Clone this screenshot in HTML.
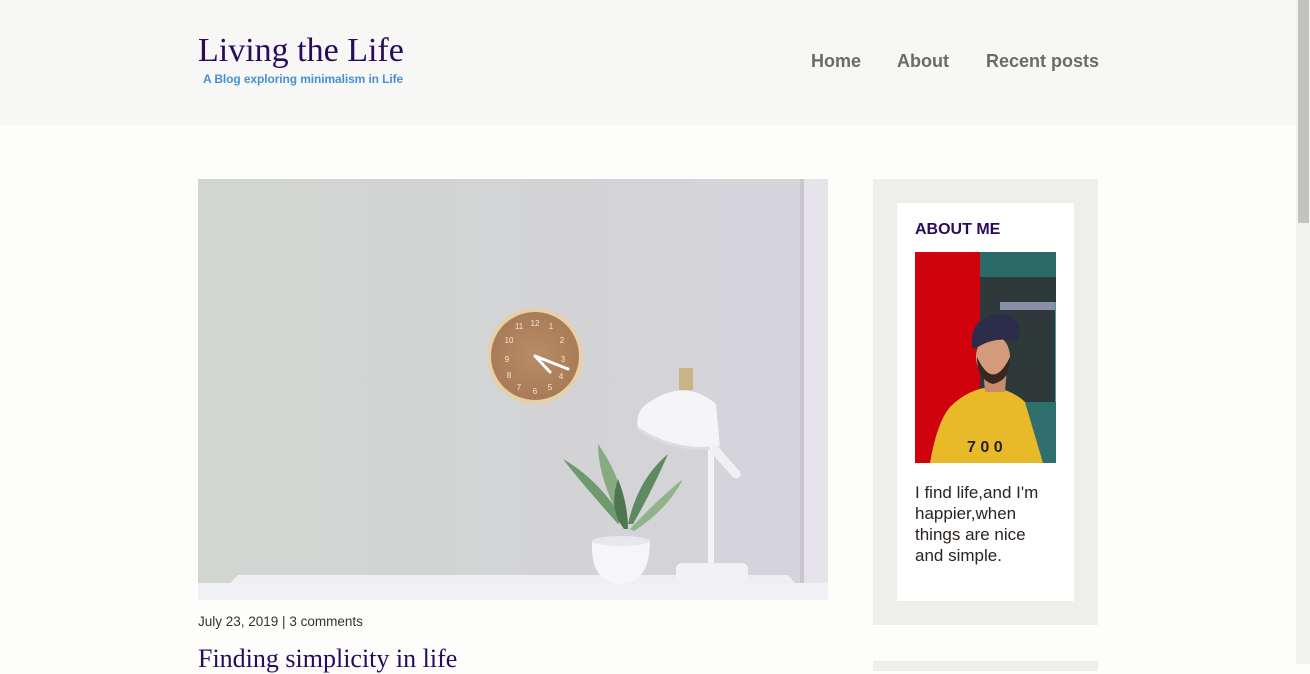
<!DOCTYPE html>
<html><head><meta charset="utf-8"><style>
*{margin:0;padding:0;box-sizing:border-box}
html,body{width:1310px;height:664px;overflow:hidden;background:#fdfdfb;font-family:"Liberation Sans",sans-serif}
.header{position:absolute;left:0;top:0;width:1296px;height:125px;background:#f7f7f5}
.logo{position:absolute;left:198px;top:32px;font-family:"Liberation Serif",serif;font-size:34px;color:#2a0a5e}
.tag{position:absolute;left:203px;top:72px;font-size:12px;font-weight:bold;color:#4a8fd4;letter-spacing:-0.1px}
.nav{position:absolute;top:51px;font-size:18px;font-weight:bold;color:#6e6a66}
.scroll{position:absolute;left:1296px;top:0;width:14px;height:664px;background:#f1f1ef}
.thumb{position:absolute;left:1298px;top:0;width:11px;height:223px;background:#c2c2bf}
.side{position:absolute;left:873px;top:179px;width:225px;height:446px;background:#eeeeeb}
.inner{position:absolute;left:897px;top:203px;width:177px;height:398px;background:#fff}
.side2{position:absolute;left:873px;top:661px;width:225px;height:10px;background:#eeeeeb}
h3{position:absolute;left:915px;top:221px;font-size:16px;font-weight:bold;color:#2a0a5e}
.about{position:absolute;left:915px;top:482px;width:135px;font-size:17px;line-height:21px;color:#2b2420}
.meta{position:absolute;left:198px;top:614px;font-size:13.5px;color:#333}
.title{position:absolute;left:198px;top:644px;font-family:"Liberation Serif",serif;font-size:26px;color:#2a0a5e}
</style></head><body>
<div class="header">
<div class="logo">Living the Life</div>
<div class="tag">A Blog exploring minimalism in Life</div>
<div class="nav" style="left:811px">Home</div>
<div class="nav" style="left:897px">About</div>
<div class="nav" style="left:986px">Recent posts</div>
</div>
<svg style="position:absolute;left:198px;top:179px" width="630" height="421" viewBox="0 0 630 421">
<defs><linearGradient id="w" x1="0" x2="1"><stop offset="0" stop-color="#d2d6d1"/><stop offset="0.6" stop-color="#d3d3d6"/><stop offset="1" stop-color="#d6d4dc"/></linearGradient>
<radialGradient id="c"><stop offset="0" stop-color="#b88c66"/><stop offset="1" stop-color="#a97c58"/></radialGradient></defs>
<rect width="630" height="421" fill="url(#w)"/>
<rect x="606" width="24" height="421" fill="#e6e4ea"/>
<rect x="602" width="4" height="421" fill="#c9c7cd"/>
<path d="M40 396 L590 396 L612 421 L15 421Z" fill="#eeedf1"/>
<rect x="0" y="404" width="630" height="17" fill="#f1f0f4"/>
<circle cx="337" cy="177" r="48" fill="#e7cfa8"/>
<circle cx="337" cy="177" r="44" fill="url(#c)"/>
<path d="M337 177 L370 190 M337 177 L352 193" stroke="#fff" stroke-width="3" stroke-linecap="round"/>
<g fill="#f3e6d6" font-size="8" font-family="Liberation Sans" text-anchor="middle">
<text x="337" y="147">12</text><text x="365" y="183">3</text><text x="337" y="215">6</text><text x="309" y="183">9</text>
<text x="353" y="150">1</text><text x="364" y="164">2</text><text x="363" y="200">4</text><text x="352" y="211">5</text>
<text x="321" y="211">7</text><text x="311" y="199">8</text><text x="311" y="164">10</text><text x="321" y="150">11</text></g>
<rect x="510" y="262" width="6" height="130" fill="#f4f4f6"/>
<ellipse cx="514" cy="396" rx="36" ry="12" fill="#f2f2f4"/>
<rect x="478" y="384" width="72" height="14" rx="6" fill="#f2f2f4"/>
<rect x="481" y="189" width="14" height="22" fill="#c9b485"/>
<path d="M455 221 Q488 200 518 225 L522 268 Q480 275 440 250 Q436 230 455 221Z" fill="#f5f5f7"/>
<path d="M440 250 Q480 275 522 268" stroke="#dcdce2" stroke-width="3" fill="none"/>
<path d="M516 270 L538 295" stroke="#f0f0f2" stroke-width="9" stroke-linecap="round"/>
<g fill="#6f9a6e">
<path d="M420 345 Q380 300 365 280 Q400 300 425 340Z"/>
<path d="M425 345 Q400 300 400 265 Q425 300 430 345Z" fill="#86ab80"/>
<path d="M430 345 Q440 300 470 275 Q455 310 435 345Z" fill="#5d8a5f"/>
<path d="M432 350 Q460 320 485 300 Q470 330 436 352Z" fill="#8fb38a"/>
<path d="M426 350 Q410 330 420 300 Q430 325 430 350Z" fill="#4e7651"/>
</g>
<path d="M394 362 Q392 404 423 405 Q452 404 452 362Z" fill="#f6f6f8"/>
<ellipse cx="423" cy="362" rx="29" ry="5" fill="#e8e8ec"/>
</svg>
<div class="meta">July 23, 2019 | 3 comments</div>
<div class="title">Finding simplicity in life</div>
<div class="side"></div><div class="inner"></div><div class="side2"></div>
<h3>ABOUT ME</h3>
<svg style="position:absolute;left:915px;top:252px" width="141" height="211" viewBox="0 0 141 211">
<rect width="141" height="211" fill="#2e3a3a"/>
<rect width="65" height="211" fill="#d0020e"/>
<rect x="65" y="0" width="76" height="25" fill="#2c6a68"/>
<rect x="85" y="50" width="56" height="8" fill="#8a90a8"/>
<rect x="140" y="50" width="1" height="161" fill="#4b9a9a"/>
<rect x="110" y="150" width="31" height="61" fill="#2f6f6e"/>
<path d="M35 155 Q55 135 80 135 Q100 140 110 150 L128 211 L15 211 Q22 170 35 155Z" fill="#e8b928"/>
<path d="M68 115 L92 115 L90 140 L70 140Z" fill="#c98c6a"/>
<ellipse cx="78" cy="105" rx="17" ry="22" fill="#d39b7c"/>
<path d="M62 105 Q78 140 95 105 Q96 128 78 132 Q62 128 62 105Z" fill="#3a2620"/>
<path d="M57 95 Q55 63 85 62 Q112 65 102 90 Q80 83 60 97Z" fill="#2b2d4a"/>
<text x="52" y="200" font-size="16" font-family="Liberation Sans" font-weight="bold" fill="#222">7 0 0</text>
</svg>
<div class="about">I find life,and I'm happier,when things are nice and simple.</div>
<div class="scroll"></div><div class="thumb"></div>
</body></html>
